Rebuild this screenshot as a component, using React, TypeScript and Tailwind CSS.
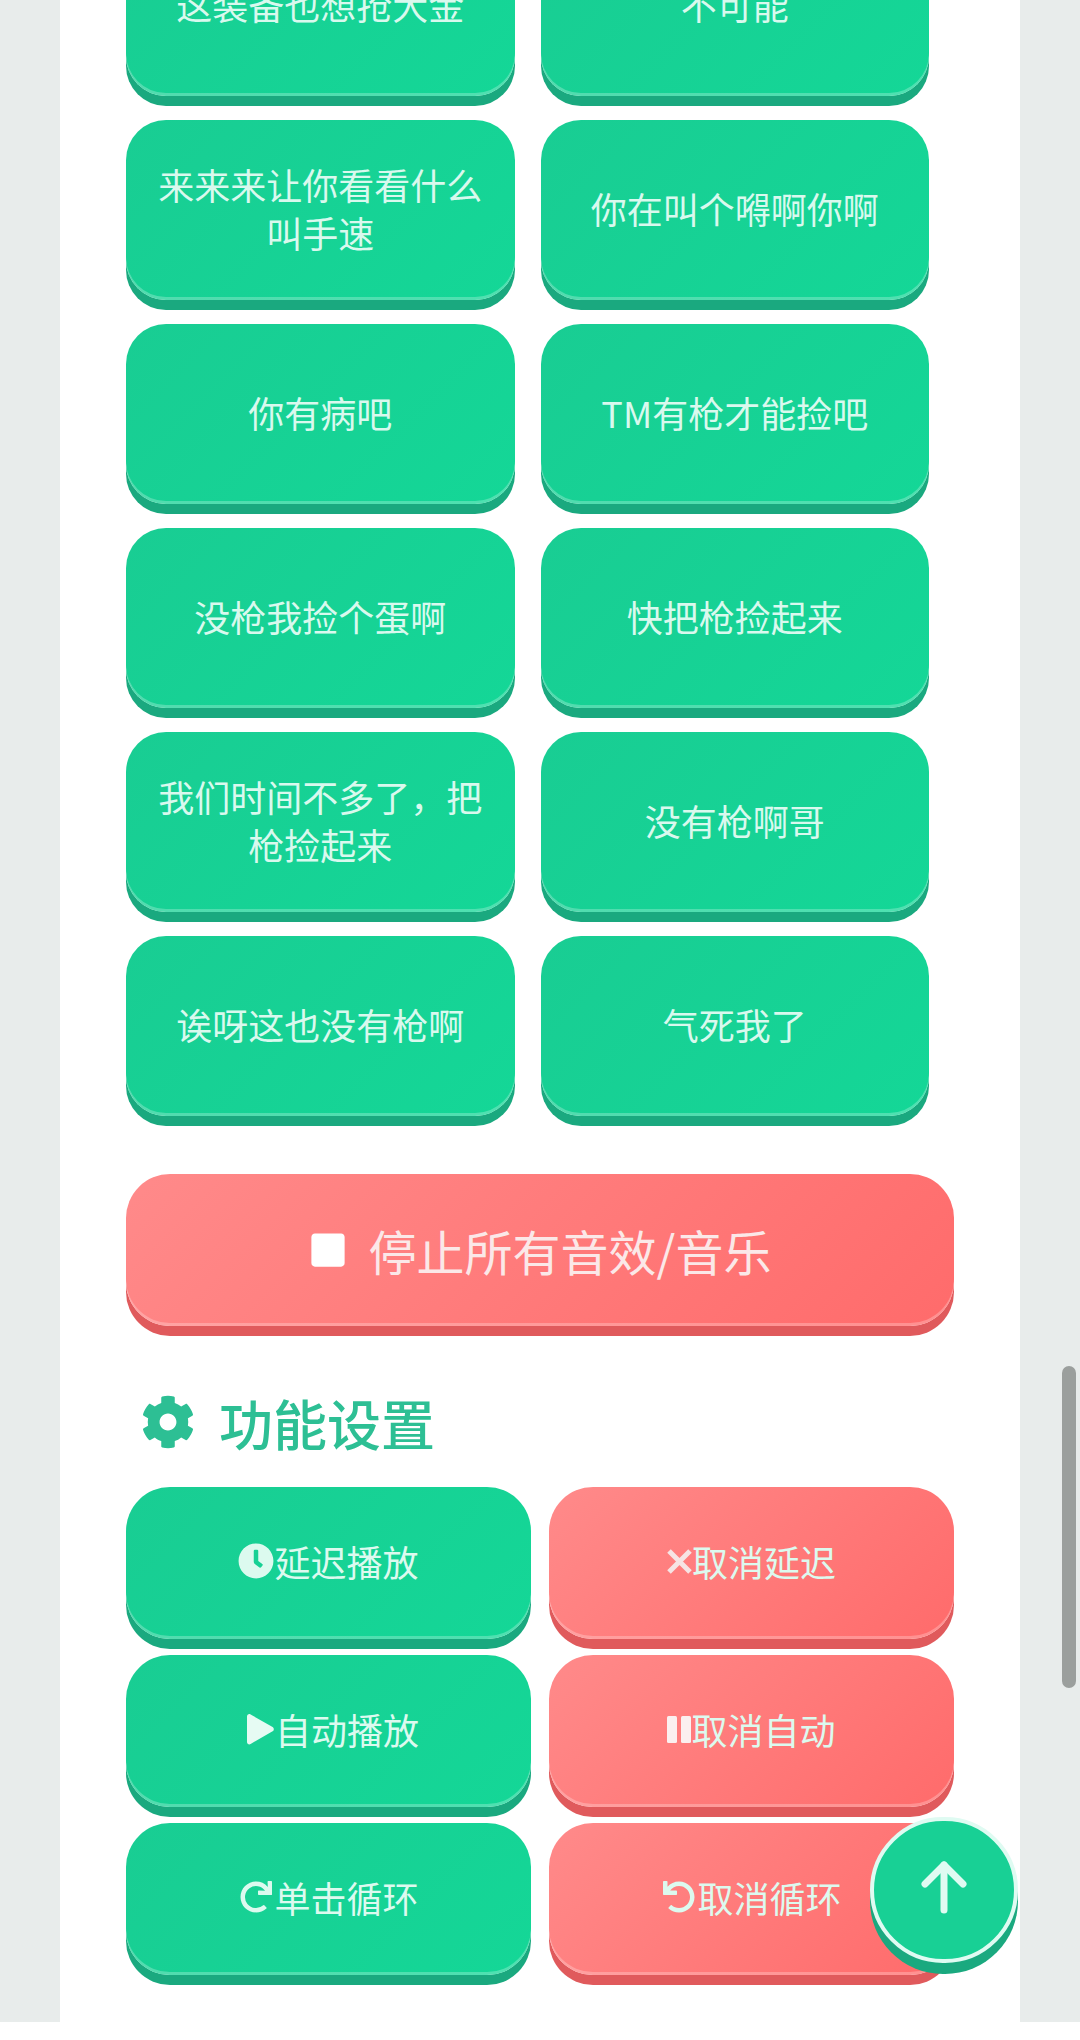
import React from "react";
import { FaClock, FaRedo, FaUndo, FaStop, FaCog } from "react-icons/fa";

const soundNames = [
  "这装备也想抢大金",
  "不可能",
  "来来来让你看看什么叫手速",
  "你在叫个嘚啊你啊",
  "你有病吧",
  "TM有枪才能捡吧",
  "没枪我捡个蛋啊",
  "快把枪捡起来",
  "我们时间不多了，把枪捡起来",
  "没有枪啊哥",
  "诶呀这也没有枪啊",
  "气死我了",
];

const greenButton =
  "bg-[linear-gradient(135deg,#19cd93,#14d797)] shadow-[0_10px_0_#1aa97f,inset_0_-3px_0_rgba(255,255,255,0.25)]";
const redButton =
  "bg-[linear-gradient(135deg,#ff8a8a,#ff6b6b)] shadow-[0_10px_0_#e05a5c,inset_0_-3px_0_rgba(255,255,255,0.25)]";

function SettingButton({
  icon,
  label,
  red,
}: {
  icon: React.ReactNode;
  label: string;
  red?: boolean;
}) {
  return (
    <button
      className={`flex h-[152px] items-center justify-center rounded-[44px] pb-[4px] text-[36px] text-[#dcfaef] ${
        red ? redButton : greenButton
      }`}
    >
      {icon}
      <span>{label}</span>
    </button>
  );
}

export default function App() {
  return (
    <div
      className="relative h-[2040px] w-[1080px] overflow-hidden bg-white"
      style={{ fontFamily: '"Noto Sans CJK SC", "Noto Sans", sans-serif' }}
    >
      <div className="h-[2022px] overflow-hidden bg-[#e8eceb] px-[60px]">
        <div className="flex h-full flex-col bg-white px-[66px]">
          <div className="-mt-[84px] grid grid-cols-2 gap-x-[26px] gap-y-[24px] pr-[25px]">
            {soundNames.map((name) => (
              <button
                key={name}
                className={`flex h-[180px] items-center justify-center rounded-[40px] px-[28px] pb-[4px] text-center text-[36px] leading-[48px] text-[#d9f9ee] ${greenButton}`}
              >
                {name}
              </button>
            ))}
          </div>

          <button
            className={`mt-[58px] flex h-[152px] shrink-0 items-center justify-center rounded-[44px] text-[48px] text-[#fbe8e8] ${redButton}`}
          >
            <FaStop className="mr-[22px] text-[38px] text-white" />
            停止所有音效/音乐
          </button>

          <div className="mt-[68px] flex h-[56px] shrink-0 items-center pl-[15px] text-[54px] font-medium text-[#2dbf94]">
            <FaCog className="mr-[24px] text-[54px]" />
            功能设置
          </div>

          <div className="mt-[37px] grid grid-cols-2 gap-x-[18px] gap-y-[16px]">
            <SettingButton icon={<FaClock className="text-[36px]" />} label="延迟播放" />
            <SettingButton
              red
              label="取消延迟"
              icon={
                <svg width="25" height="25" viewBox="0 0 25 25" fill="none" stroke="#f6e4e4" strokeWidth="5">
                  <path d="M2 2l21 21M23 2L2 23" />
                </svg>
              }
            />
            <SettingButton
              label="自动播放"
              icon={
                <svg width="27" height="31" viewBox="0 0 27 31" fill="#e6fbf3" className="ml-[9px] mr-[1px]">
                  <path d="M0 2.5C0 .6 2 -.5 3.6.5l22 12.6c1.6.9 1.6 3.2 0 4.1l-22 12.8C2 31 0 29.900 0 28z" />
                </svg>
              }
            />
            <SettingButton
              red
              label="取消自动"
              icon={
                <svg width="24" height="27" viewBox="0 0 24 27" fill="#fbf0f0">
                  <rect x="0" y="0" width="10" height="27" rx="1.500" />
                  <rect x="14" y="0" width="10" height="27" rx="1.500" />
                </svg>
              }
            />
            <SettingButton icon={<FaRedo className="mx-[2px] text-[32px]" />} label="单击循环" />
            <SettingButton red icon={<FaUndo className="mx-[2px] text-[32px]" />} label="取消循环" />
          </div>
        </div>
      </div>

      {/* scrollbar thumb */}
      <div className="absolute left-[1062px] top-[1366px] h-[322px] w-[14px] rounded-full bg-[#9b9f9d]" />

      {/* back to top */}
      <button className="absolute left-[870px] top-[1817px] flex h-[146px] w-[148px] items-center justify-center rounded-full border-[4px] border-[#dffbf2] bg-[#18d095] pb-[6px] shadow-[0_11px_0_#1aa97f]">
        <svg
          width="46"
          height="54"
          viewBox="0 0 46 54"
          fill="none"
          stroke="#dffbf2"
          strokeWidth="7"
          strokeLinecap="round"
          strokeLinejoin="round"
        >
          <path d="M23 50V5" />
          <path d="M4 24L23 5l19 19" />
        </svg>
      </button>
    </div>
  );
}
